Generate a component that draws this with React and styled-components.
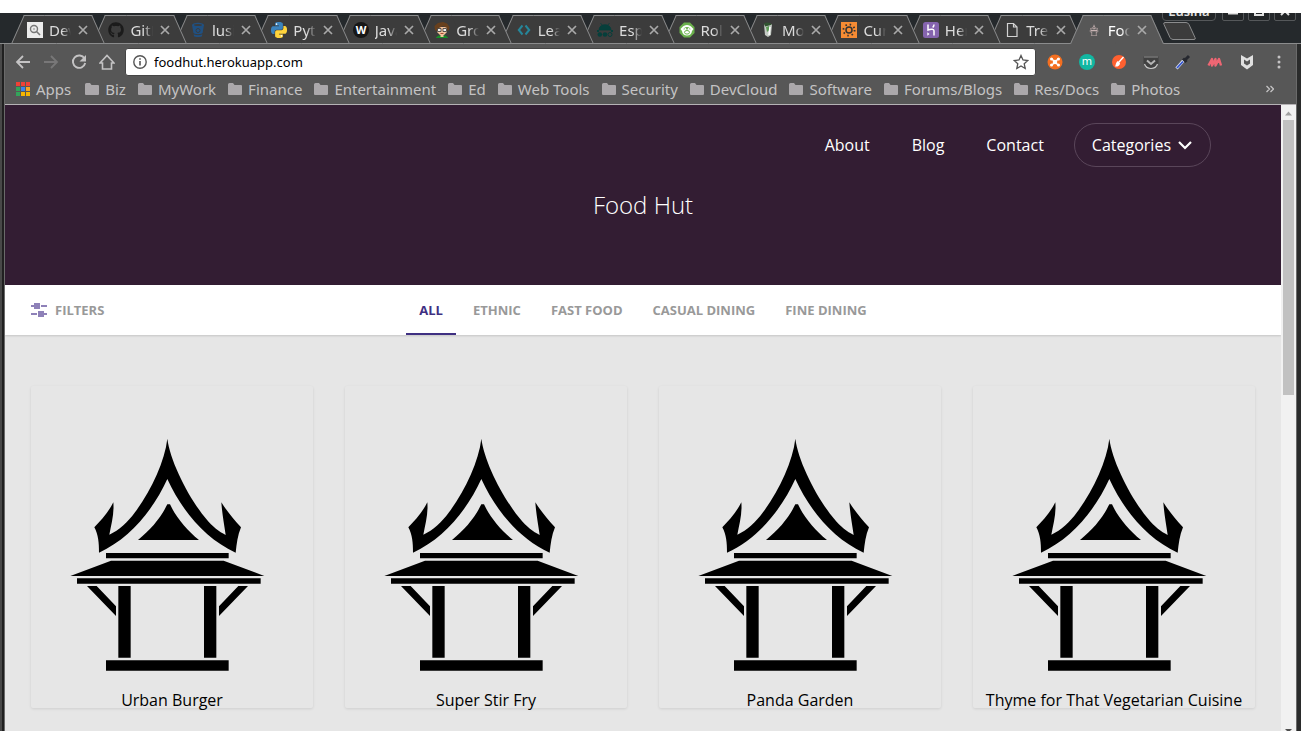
import React from 'react';
import styled, { createGlobalStyle, css } from 'styled-components';
import { FaGithub } from 'react-icons/fa';

const colors = {
  strip: '#25292c',
  tab: '#3c3c3c',
  toolbar: '#575757',
  edge: '#8b8c8d',
  chromeText: '#c4c3c4',
  plum: '#331d33',
  violet: '#3f3082',
  page: '#e6e6e6',
};

const GlobalStyle = createGlobalStyle`
  *, *::before, *::after { box-sizing: border-box; }
  body { margin: 0; background: #fff; font-family: "Open Sans", "Noto Sans", sans-serif; font-size: 16px; }
  button, input { font: inherit; color: inherit; margin: 0; padding: 0; border: 0; background: none; }
  button { cursor: pointer; }
  a { color: inherit; text-decoration: none; }
  svg { display: block; flex: none; }
`;

const Desktop = styled.div`
  padding: 13px 0;
  height: 100vh;
`;

const Window = styled.div`
  display: flex;
  flex-direction: column;
  height: 100%;
  overflow: hidden;
  background: ${colors.strip};
`;

const TabStrip = styled.div`
  position: relative;
  display: flex;
  align-items: flex-end;
  flex: none;
  height: 31px;
  padding-left: 11px;
  overflow: hidden;
  font-family: "Noto Sans", sans-serif;
  font-size: 15px;
  box-shadow: inset 0 -1px ${colors.edge};
`;

const TabList = styled.div`
  display: flex;
  flex: none;
  width: 89%;
  padding-right: 8px;
`;

const Tab = styled.div`
  position: relative;
  z-index: ${(p) => p.$layer};
  display: flex;
  align-items: center;
  flex: 1 1 0;
  min-width: 0;
  height: 29px;
  margin-right: -13px;
  padding: 0 17px 0 16px;
  color: ${(p) => (p.$active ? '#fff' : '#dcdcdc')};

  &::before,
  &::after {
    content: "";
    position: absolute;
    z-index: -1;
    top: 0;
    bottom: 0;
    background: ${(p) => (p.$active ? colors.toolbar : colors.tab)};
    border: 0 solid ${colors.edge};
    border-top-width: 1px;
    ${(p) => !p.$active && css`border-bottom-width: 1px;`}
  }
  &::before {
    left: 0;
    right: 49%;
    border-left-width: 1px;
    transform: skewX(-24deg);
    transform-origin: bottom left;
  }
  &::after {
    left: 49%;
    right: 0;
    border-right-width: 1px;
    transform: skewX(24deg);
    transform-origin: bottom right;
  }
`;

const TabTitle = styled.button`
  display: flex;
  align-items: center;
  gap: 6px;
  flex: 1;
  min-width: 0;
  overflow: hidden;
  line-height: 24px;
  white-space: nowrap;
`;

const FadingText = styled.span`
  flex: 1;
  min-width: 0;
  overflow: hidden;
  text-align: left;
  mask-image: linear-gradient(to right, #000 60%, transparent 100%);
`;

const CloseTab = styled.button`
  display: flex;
  flex: none;
  margin-left: 7px;
  color: #a9a9a9;
`;

const NewTab = styled.button`
  flex: none;
  margin: 0 0 4px 3px;
`;

const WindowControls = styled.div`
  position: absolute;
  top: -12px;
  right: 5px;
  display: flex;
  gap: 4px;
  color: #e2e2e2;
`;

const ControlButton = styled.button`
  display: flex;
  align-items: center;
  justify-content: center;
  width: ${(p) => (p.$wide ? 54 : 22)}px;
  height: 20px;
  margin-right: ${(p) => (p.$wide ? 2 : 0)}px;
  border: 1px solid #55585a;
  border-radius: ${(p) => (p.$wide ? 4 : 2)}px;
  background: #222527;
  font-size: 13px;
  font-weight: 600;
`;

const Frame = styled.div`
  display: flex;
  flex-direction: column;
  flex: 1;
  min-height: 0;
  border: solid #484848;
  border-width: 0 4px 0 2px;
  border-right-color: #2a2b2b;
  background: #202020;
  padding-left: 2px;
`;

const FrameInner = styled.div`
  display: flex;
  flex-direction: column;
  flex: 1;
  min-height: 0;
  border: solid #6a6a6a;
  border-width: 0 1px;
`;

const Toolbar = styled.header`
  flex: none;
  background: ${colors.toolbar};
  border-bottom: 1px solid #b5b2b5;
  color: ${colors.chromeText};
  font-family: "Noto Sans", sans-serif;
`;

const AddressRow = styled.div`
  display: flex;
  align-items: center;
  height: 35px;
  padding: 0 9px;
`;

const IconButton = styled.button`
  display: flex;
  align-items: center;
  justify-content: center;
  flex: none;
  width: ${(p) => (p.$narrow ? 28 : 32)}px;
  height: 28px;
  opacity: ${(p) => (p.disabled ? 0.3 : 1)};
`;

const NavButtons = styled.div`
  display: flex;
  margin: 0 4px 0 -5px;
`;

const AddressBox = styled.label`
  display: flex;
  align-items: center;
  gap: 7px;
  flex: 1;
  min-width: 0;
  height: 28px;
  padding: 0 6px 0 7px;
  border: 1px solid #454545;
  border-radius: 3px;
  background: #fff;
`;

const AddressInput = styled.input`
  flex: 1;
  min-width: 0;
  color: #000;
  font-size: 13px;
  outline: 0;
`;

const Extensions = styled.div`
  display: flex;
  margin: 0 -8px 0 3px;
`;

const BookmarkRow = styled.nav`
  display: flex;
  align-items: center;
  height: 25px;
  padding: 0 22px 6px 11px;
  font-size: 15px;
  line-height: 20px;
  white-space: nowrap;
`;

const Bookmark = styled.a`
  display: flex;
  align-items: center;
  gap: 6px;
  flex: none;
  margin-right: ${(p) => (p.$apps ? 14 : 12)}px;
`;

const More = styled.button`
  margin-left: auto;
`;

const Viewport = styled.div`
  display: flex;
  flex: 1;
  min-height: 0;
`;

const Page = styled.div`
  flex: 1;
  min-width: 0;
  overflow: hidden;
  background: ${colors.page};
  color: #000;
`;

const Hero = styled.header`
  height: 180px;
  padding: 18px 70px 0;
  background: ${colors.plum};
  color: #fff;
`;

const SiteNav = styled.nav`
  display: flex;
  align-items: center;
  justify-content: flex-end;
  gap: 42px;
  height: 44px;
`;

const CategoriesButton = styled.button`
  display: flex;
  align-items: center;
  gap: 6px;
  height: 44px;
  margin-left: -12px;
  padding: 0 17px;
  border: 1px solid #5a465a;
  border-radius: 22px;
`;

const SiteTitle = styled.h1`
  margin: 22px 0 0;
  font-size: 24px;
  font-weight: 300;
  line-height: 32px;
  text-align: center;
`;

const FilterBar = styled.div`
  display: grid;
  grid-template-columns: 1fr auto 1fr;
  height: 50px;
  padding: 0 26px;
  background: #fff;
  box-shadow: 0 1px 2px rgba(0, 0, 0, 0.15);
  color: #999;
  font-size: 13px;
  font-weight: 700;
  text-transform: uppercase;
`;

const FiltersButton = styled.button`
  display: flex;
  align-items: center;
  justify-self: start;
  gap: 8px;
  text-transform: inherit;
`;

const FilterTabs = styled.nav`
  display: flex;
  gap: 4px;
`;

const FilterTab = styled.a`
  display: flex;
  align-items: center;
  padding: 0 13px;
  ${(p) =>
    p.$active &&
    css`
      color: ${colors.violet};
      box-shadow: inset 0 -2px ${colors.violet};
    `}
`;

const CardGrid = styled.main`
  display: grid;
  grid-template-columns: repeat(4, minmax(0, 1fr));
  gap: 32px;
  padding: 51px 26px;
`;

const Card = styled.a`
  display: block;
  border-radius: 2px;
  box-shadow: 0 1px 3px rgba(0, 0, 0, 0.1);
  text-align: center;
`;

const CardName = styled.span`
  display: block;
  line-height: 16px;
  white-space: nowrap;
`;

const Scrollbar = styled.div`
  display: flex;
  flex-direction: column;
  align-items: center;
  flex: none;
  width: 15px;
  padding-top: 6px;
  overflow: hidden;
  background: #f1f1f1;
`;

const Thumb = styled.div`
  flex: none;
  width: 11px;
  height: calc(44% + 2px);
  margin: 4px 0 auto;
  background: #c1c1c1;
`;

const Svg = ({ size = 16, box = 16, children, ...rest }) => (
  <svg width={size} height={size} viewBox={`0 0 ${box} ${box}`} fill="none" aria-hidden="true" {...rest}>
    {children}
  </svg>
);

const pythonHalf =
  'M14.25.18l.9.2.73.26.59.3.45.32.34.34.25.34.16.33.1.3.04.26.02.2-.01.13V8.5l-.05.63-.13.55-.21.46-.26.38-.3.31-.33.25-.35.19-.35.14-.33.1-.3.07-.26.04-.21.02H8.77l-.69.05-.59.14-.5.22-.41.27-.33.32-.27.35-.2.36-.15.37-.1.35-.07.32-.04.27-.02.21v3.06H3.17l-.21-.03-.28-.07-.32-.12-.35-.18-.36-.26-.36-.36-.35-.46-.32-.59-.28-.73-.21-.88-.14-1.05-.05-1.23.06-1.22.16-1.04.24-.87.32-.71.36-.57.4-.44.42-.33.42-.24.4-.16.36-.1.32-.05.24-.01h.16l.06.01h8.16v-.83H6.18l-.01-2.75-.02-.37.05-.34.11-.31.17-.28.25-.26.31-.23.38-.2.44-.18.51-.15.58-.12.64-.1.71-.06.77-.04.84-.02 1.27.05z';

const SearchFavicon = () => (
  <Svg>
    <rect width="16" height="16" fill="#ececec" />
    <circle cx="7" cy="7" r="3.5" stroke="#777" strokeWidth="1.4" />
    <path d="M9.5 9.5l3.5 3.5" stroke="#777" strokeWidth="1.6" />
    <circle cx="7" cy="7" r="1.2" fill="#bbb" />
  </Svg>
);
const BucketFavicon = () => (
  <Svg>
    <path d="M2 3h12l-2 11c-.2 1.3-7.8 1.3-8 0z" fill="#205081" />
    <ellipse cx="8" cy="3" rx="6" ry="2.2" fill="#205081" />
    <ellipse cx="8" cy="3" rx="4" ry="1" fill="#3c3c3c" />
    <circle cx="8" cy="8.5" r="2" stroke="#3c3c3c" strokeWidth="1" />
    <path d="M3 11.5c2 1.6 8 1.6 10 0" stroke="#3c3c3c" />
  </Svg>
);
const PythonFavicon = () => (
  <Svg box={24}>
    <path d={pythonHalf} fill="#3b83bd" />
    <path d={pythonHalf} fill="#ffd43b" transform="rotate(180 12 12)" />
    <circle cx="8.3" cy="3.2" r="1.2" fill="#fff" />
    <circle cx="15.7" cy="20.8" r="1.2" fill="#fff" />
  </Svg>
);
const WFavicon = () => (
  <Svg>
    <circle cx="8" cy="8" r="8" fill="#171717" />
    <text x="8" y="12" textAnchor="middle" fontFamily="Open Sans, sans-serif" fontWeight="700" fontSize="11" fill="#fff">W</text>
  </Svg>
);
const AvatarFavicon = () => (
  <Svg>
    <path d="M3 5h10v5l-3 3H6l-3-3z" fill="#f3c29b" />
    <path d="M1 8L.5 4 4 1l5-1 4 1.500L15.500 5 15 8l-1.500 1L13 6 9 4 5 6 2.500 9z" fill="#68401d" />
    <path d="M3.500 6.500h3.500v3H3.500zM9 6.500h3.500v3H9z" fill="#eee" stroke="#333" strokeWidth=".8" />
    <path d="M6.500 11.500h3" stroke="#a34c35" />
    <path d="M2 15.500l2.500-2h7l2.500 2v.5H2z" fill="#188e28" />
    <path d="M6.500 13h3v2h-3z" fill="#f3c29b" />
  </Svg>
);
const CodeFavicon = () => (
  <Svg>
    <path d="M6.500 3.500L2.800 8l3.700 4.500M9.500 3.500L13.200 8l-3.700 4.500" stroke="#26869a" strokeWidth="2" />
  </Svg>
);
const AndroidFavicon = () => (
  <Svg>
    <path d="M2 8c0-7 12-7 12 0zM3.500 1l2 2.500M12.500 1l-2 2.500" fill="#063f3b" stroke="#063f3b" strokeWidth=".8" />
    <path d="M0 8h2v2H0zM14 8h2v2h-2z" fill="#063f3b" />
    <circle cx="2.800" cy="12.500" r="2.300" fill="#063f3b" />
    <circle cx="8" cy="12.500" r="2.300" fill="#063f3b" />
    <circle cx="13" cy="12.500" r="2" stroke="#063f3b" />
  </Svg>
);
const MonkeyFavicon = () => (
  <Svg>
    <path d="M5 .5h6L15.500 5v6L11 15.500H5L.5 11V5z" fill="#6ab04c" />
    <path d="M3 5.500C5 2 11 2 13 5.500l1.500 1.500-1.500 2c-.5 6-9.500 6-10 0L1.500 7z" fill="#fff" />
    <path d="M4.500 7.500c0-3.500 7-3.500 7 0z" fill="#6ab04c" />
    <circle cx="6.300" cy="7" r="1" fill="#fff" />
    <circle cx="9.700" cy="7" r="1" fill="#fff" />
    <ellipse cx="8" cy="10.300" rx="2.500" ry="1.800" stroke="#6ab04c" />
  </Svg>
);
const CupFavicon = () => (
  <Svg>
    <path d="M4 2.500l8-.5-1 11-3 2-3-2z" fill="#c5cbc5" />
    <path d="M4 1.500c3-2 6-1 8 1l-3 1-4 1z" fill="#315330" />
    <path d="M6 5l3-1 .5 4L7 10z" fill="#5d9c56" />
    <path d="M10 5l-1 8" stroke="#fff" strokeWidth="1.500" />
  </Svg>
);
const SunFavicon = () => (
  <Svg>
    <rect width="16" height="16" fill="#f68b33" />
    <circle cx="8" cy="8" r="3" stroke="#333" strokeWidth="1.500" />
    <circle cx="8" cy="8" r="5.600" stroke="#333" strokeWidth="1.800" strokeDasharray="1.500 2.900" />
  </Svg>
);
const HerokuFavicon = () => (
  <Svg>
    <rect width="16" height="16" rx="2.500" fill="#8564ae" />
    <path d="M5 2.500V8c3-1.300 6-1.200 6 .8v4.700M11 2.500c0 1.300-.5 2.200-1.300 3" stroke="#fff" strokeWidth="1.500" />
    <path d="M4.300 10.200l2.200 1.700-2.200 1.800z" fill="#fff" />
  </Svg>
);
const PageFavicon = () => (
  <Svg>
    <path d="M3.500 1.500h6L13 5v9.500H3.500zM9.500 1.500V5H13" stroke="#d3d3d3" strokeWidth="1.200" />
  </Svg>
);
const HutShape = () => (
  <g fill="currentColor">
    <path d="M322 26C331 95 386 203 437 265C459 292 477 305 497 315C492 280 486 248 484 217C501 244 522 269 543 292C533 315 530 341 527 368C435 326 365 241 322 147C279 241 209 326 117 368C117 339 115 314 103 292C124 270 145 247 160 217C163 252 154 282 148 314C178 301 203 277 225 247C273 181 314 96 322 26Z" />
    <path d="M322 223H330C348 262 382 302 417 330H234C273 298 302 264 322 223Z" />
    <path d="M138 369H506V385H138ZM153 392H491L613 438H31ZM51 445H602V461H51ZM175 468H212V683H175ZM432 468H469V683H432ZM138 691H506V722H138ZM81 468H110L168 529V558ZM535 468H564L477 558V529Z" />
  </g>
);
const HutFavicon = () => (
  <svg width="16" height="12" viewBox="20 20 604 710" color="#c9b4b4" aria-hidden="true">
    <HutShape />
  </svg>
);
const CloseIcon = () => (
  <Svg size={10} box={10}>
    <path d="M1 1l8 8M9 1L1 9" stroke="currentColor" strokeWidth="1.700" />
  </Svg>
);
const Folder = () => (
  <Svg size={14} box={14}>
    <path d="M0 2.500Q0 1 1.500 1H5l1.500 2H13q1 0 1 1v8q0 1-1 1H1q-1 0-1-1z" fill="#aba8ab" />
  </Svg>
);
const AppsIcon = () => (
  <Svg size={14} box={14}>
    {['#ef4136', '#ef4136', '#ef4136', '#33a45a', '#3b84ed', '#f5a623', '#33a45a', '#f7b500', '#f7b500'].map((fill, i) => (
      <rect key={i} x={(i % 3) * 5} y={Math.floor(i / 3) * 5} width="4" height="4" fill={fill} />
    ))}
  </Svg>
);

const tabs = [
  ['Devs', SearchFavicon],
  ['GitHub', () => <FaGithub size={16} color="#1b1b1b" />],
  ['lusina', BucketFavicon],
  ['Python', PythonFavicon],
  ['Java', WFavicon],
  ['Group', AvatarFavicon],
  ['Learn', CodeFavicon],
  ['Espresso', AndroidFavicon],
  ['Roll', MonkeyFavicon],
  ['Mocha', CupFavicon],
  ['Current', SunFavicon],
  ['Heroku', HerokuFavicon],
  ['Tree', PageFavicon],
  ['Food Hut', HutFavicon],
];

const navIcons = [
  ['Back', <path key="b" d="M15 8H2M8 2L2 8l6 6" stroke="currentColor" strokeWidth="1.800" />],
  ['Forward', <path key="f" d="M1 8h13M8 2l6 6-6 6" stroke="currentColor" strokeWidth="1.800" />],
  [
    'Reload',
    <g key="r">
      <path d="M13.500 4.500A6.200 6.200 0 1 0 14.200 9" stroke="currentColor" strokeWidth="1.900" />
      <path d="M15 1v6.500H8.500z" fill="currentColor" />
    </g>,
  ],
  ['Home', <path key="h" d="M1 9l7-7.500L15 9h-2.500v6h-9V9z" stroke="currentColor" strokeWidth="1.600" />],
];

const extensions = [
  [
    'Hub',
    <g key="0">
      <circle cx="8" cy="8" r="7.500" fill="#f36f21" />
      <path d="M4.500 4.500l7 7M11.500 4.500l-7 7" stroke="#fff" strokeWidth="1.500" />
      <circle cx="8" cy="8" r="2.300" fill="#fff" />
      <circle cx="4.500" cy="5" r="1.500" fill="#fff" />
      <circle cx="11.500" cy="5" r="1.500" fill="#fff" />
      <circle cx="4.500" cy="11" r="1.500" fill="#fff" />
      <circle cx="11.500" cy="11" r="1.500" fill="#fff" />
    </g>,
  ],
  [
    'Momentum',
    <g key="1">
      <circle cx="8" cy="8" r="8" fill="#12b7a2" />
      <text x="8" y="11" textAnchor="middle" fontSize="11" fill="#fff">m</text>
    </g>,
  ],
  [
    'Brush',
    <g key="2">
      <circle cx="8" cy="8" r="7" fill="#ff6030" />
      <path d="M12.500 3L8 8" stroke="#fff" strokeWidth="1.400" />
      <path d="M7 7l2 2c0 3-3 4-5 3.500C5 11.500 4.500 8 7 7z" fill="#fff" />
    </g>,
  ],
  [
    'Pocket',
    <g key="3">
      <path d="M.5 2.500h15V8c0 9-15 9-15 0z" fill="#414141" />
      <path d="M1 3h14" stroke="#8d8d8d" />
      <path d="M1.500 10c2 6 11 6 13 0" stroke="#c9c9c9" strokeWidth="1.200" />
      <path d="M4 6.500L8 10l4-3.500" stroke="#b5b5b5" strokeWidth="2" />
    </g>,
  ],
  [
    'Color picker',
    <g key="4">
      <path d="M1.500 14.500l7-8" stroke="#dce2f0" strokeWidth="3" />
      <path d="M2 14l6-6.500" stroke="#3455cf" strokeWidth="1.800" />
      <path d="M8 4.500L11.500 8M9.500 6.500L14 2" stroke="#26282f" strokeWidth="3" />
    </g>,
  ],
  ['Wave', <path key="5" d="M1.500 11.500L5 5v6.500L8.500 5v6.500L12 5l2 6.500" stroke="#ee6673" strokeWidth="2.400" strokeLinejoin="round" />],
  [
    'Shield',
    <path key="6" d="M2 1l6 3.500L14 1v10l-6 4.500L2 11zM5 5.500v4L8 11.500l3-2v-4L8 7.500z" fill="#e0e0e0" fillRule="evenodd" />,
  ],
  [
    'Menu',
    <g key="7" fill="currentColor">
      <circle cx="8" cy="3" r="1.500" />
      <circle cx="8" cy="8" r="1.500" />
      <circle cx="8" cy="13" r="1.500" />
    </g>,
  ],
];

const bookmarks = ['Biz', 'MyWork', 'Finance', 'Entertainment', 'Ed', 'Web Tools', 'Security', 'DevCloud', 'Software', 'Forums/Blogs', 'Res/Docs', 'Photos'];
const filters = ['All', 'Ethnic', 'Fast Food', 'Casual Dining', 'Fine Dining'];
const restaurants = ['Urban Burger', 'Super Stir Fry', 'Panda Garden', 'Thyme for That Vegetarian Cuisine'];

function BrowserTabs() {
  return (
    <TabStrip>
      <TabList>
        {tabs.map(([title, Icon], i) => {
          const active = i === tabs.length - 1;
          return (
            <Tab key={title} $active={active} $layer={active ? 20 : 15 - i}>
              <TabTitle>
                <Icon />
                <FadingText>{title}</FadingText>
              </TabTitle>
              <CloseTab aria-label={`Close ${title}`}>
                <CloseIcon />
              </CloseTab>
            </Tab>
          );
        })}
      </TabList>
      <NewTab aria-label="New tab">
        <svg width="36" height="18" viewBox="0 0 36 18" aria-hidden="true">
          <path d="M3 .5h21q2 0 3 2l6 13q1 2-1 2H11q-2 0-3-2L2 2.500Q1 .5 3 .5z" fill="#3c3c3c" stroke={colors.edge} />
        </svg>
      </NewTab>
      <WindowControls>
        <ControlButton $wide>Lusina</ControlButton>
        <ControlButton aria-label="Minimize">
          <Svg size={10} box={10}><path d="M0 7h10" stroke="currentColor" strokeWidth="3" /></Svg>
        </ControlButton>
        <ControlButton aria-label="Maximize">
          <Svg size={10} box={10}><path d="M1 1h8v8H1z" stroke="currentColor" strokeWidth="2" /></Svg>
        </ControlButton>
        <ControlButton aria-label="Close window">
          <Svg size={10} box={10}><path d="M1 1l8 8M9 1L1 9" stroke="currentColor" strokeWidth="2" /></Svg>
        </ControlButton>
      </WindowControls>
    </TabStrip>
  );
}

function BrowserToolbar() {
  return (
    <Toolbar>
      <AddressRow>
        <NavButtons>
          {navIcons.map(([label, shape]) => (
            <IconButton key={label} $narrow aria-label={label} disabled={label === 'Forward'}>
              <Svg>{shape}</Svg>
            </IconButton>
          ))}
        </NavButtons>
        <AddressBox>
          <Svg size={14} box={14}>
            <circle cx="7" cy="7" r="6.200" stroke="#555" strokeWidth="1.400" />
            <path d="M7 6v4.500M7 3.300v1.500" stroke="#555" strokeWidth="1.600" />
          </Svg>
          <AddressInput aria-label="Address" defaultValue="foodhut.herokuapp.com" />
          <Svg>
            <path d="M8 1.500l2 4.500 4.800.5-3.600 3.200 1 4.800L8 12l-4.200 2.500 1-4.800L1.200 6.500 6 6z" stroke="#555" strokeWidth="1.300" />
          </Svg>
        </AddressBox>
        <Extensions>
          {extensions.map(([label, shape]) => (
            <IconButton key={label} aria-label={label}>
              <Svg>{shape}</Svg>
            </IconButton>
          ))}
        </Extensions>
      </AddressRow>
      <BookmarkRow aria-label="Bookmarks">
        <Bookmark href="#apps" $apps>
          <AppsIcon />
          Apps
        </Bookmark>
        {bookmarks.map((name) => (
          <Bookmark key={name} href="#bookmark">
            <Folder />
            {name}
          </Bookmark>
        ))}
        <More aria-label="More bookmarks">
          <Svg size={8} box={8}>
            <path d="M.5 1l3 3-3 3M4.500 1l3 3-3 3" stroke="currentColor" strokeWidth="1.300" />
          </Svg>
        </More>
      </BookmarkRow>
    </Toolbar>
  );
}

function FoodHutPage() {
  return (
    <Page>
      <Hero>
        <SiteNav>
          <a href="#about">About</a>
          <a href="#blog">Blog</a>
          <a href="#contact">Contact</a>
          <CategoriesButton>
            Categories
            <Svg>
              <path d="M2 5l6 6 6-6" stroke="currentColor" strokeWidth="2.200" />
            </Svg>
          </CategoriesButton>
        </SiteNav>
        <SiteTitle>Food Hut</SiteTitle>
      </Hero>
      <FilterBar>
        <FiltersButton>
          <Svg>
            <path d="M0 3h3V1h6v6H3V5H0zM10 3h6v2h-6zM0 11h6v2H0zM7 9h6v2h3v2h-3v2H7z" fill="#8e81b8" />
          </Svg>
          Filters
        </FiltersButton>
        <FilterTabs>
          {filters.map((name, i) => (
            <FilterTab key={name} href="#filter" $active={i === 0}>
              {name}
            </FilterTab>
          ))}
        </FilterTabs>
      </FilterBar>
      <CardGrid>
        {restaurants.map((name) => (
          <Card key={name} href="#restaurant">
            <svg width="100%" viewBox="-87 -132 846 918" aria-hidden="true">
              <HutShape />
            </svg>
            <CardName>{name}</CardName>
          </Card>
        ))}
      </CardGrid>
    </Page>
  );
}

export default function App() {
  return (
    <Desktop>
      <GlobalStyle />
      <Window>
        <BrowserTabs />
        <Frame>
          <FrameInner>
            <BrowserToolbar />
            <Viewport>
              <FoodHutPage />
              <Scrollbar>
                <svg width="7" height="5" viewBox="0 0 7 5" aria-hidden="true">
                  <path d="M0 4.500L3.500.5 7 4.500z" fill="#a0a0a0" />
                </svg>
                <Thumb />
                <svg width="7" height="2" viewBox="0 0 7 2" aria-hidden="true">
                  <path d="M0 0h7L5 2H2z" fill="#505050" />
                </svg>
              </Scrollbar>
            </Viewport>
          </FrameInner>
        </Frame>
      </Window>
    </Desktop>
  );
}
